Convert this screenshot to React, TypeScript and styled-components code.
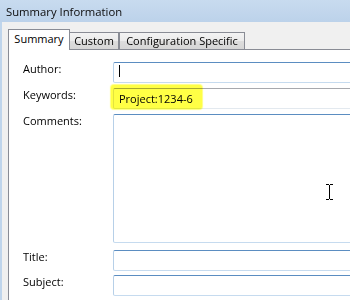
import styled, { createGlobalStyle } from "styled-components";

// ---------------- css ----------------
const GlobalStyle = createGlobalStyle`
  body {
    margin: 0;
    background: #f0f0f0;
    font-family: "Open Sans", "Noto Sans", sans-serif;
  }
`;

const Window = styled.div`
  position: relative;
  width: 350px;
  height: 300px;
  overflow: hidden;
  display: flex;
  flex-direction: column;
  background: #f0f0f0;
`;

const TitleBar = styled.div`
  flex: none;
  height: 22px;
  padding-left: 6px;
  display: flex;
  align-items: center;
  background: linear-gradient(#c8dbef, #bcd2ea);
  font-size: 11.3px;
  color: #0a0a0a;
`;

const Body = styled.div`
  flex: 1;
  display: flex;
  flex-direction: column;
  border-left: 2px solid #bfd5ec;
  padding: 7px 0 0 6px;
`;

const TabStrip = styled.div`
  flex: none;
  display: flex;
  align-items: flex-end;
  height: 20px;
`;

const Tab = styled.div<{ $active?: boolean; $w: number; $ml?: number }>`
  position: relative;
  box-sizing: border-box;
  width: ${(p) => p.$w}px;
  margin-left: ${(p) => p.$ml ?? 0}px;
  display: flex;
  justify-content: center;
  font-size: 11px;
  line-height: 14px;
  color: #000;
  border: 1px solid #898c95;
  border-bottom: none;
  ${(p) =>
    p.$active
      ? `
    height: 21px;
    margin-bottom: -1px;
    padding-top: 2px;
    background: #fff;
    z-index: 1;
  `
      : `
    height: 17px;
    padding-top: 1px;
    background: linear-gradient(#f3f3f3, #ebebeb 50%, #dddddd 51%, #d6d6d6);
  `}
`;

const Panel = styled.div`
  flex: 1;
  background: #fff;
  border-top: 1px solid #898c95;
  border-left: 1px solid #898c95;
  padding: 12px 0 0 14px;
  display: flex;
  flex-direction: column;
`;

const Field = styled.div<{ $mt?: number }>`
  display: flex;
  margin-top: ${(p) => p.$mt ?? 0}px;
`;

const Label = styled.div`
  flex: none;
  width: 90px;
  font-size: 11px;
  line-height: 14px;
  color: #000;
`;

const Box = styled.div<{ $h?: number; $plain?: boolean }>`
  position: relative;
  flex: none;
  box-sizing: border-box;
  width: 260px;
  height: ${(p) => p.$h ?? 21}px;
  border: 1px solid;
  border-color: ${(p) =>
    p.$plain
      ? "#a7a9ae #e2e3ea #e3e9ef #e2e3ea"
      : "#5b8dc1 #b7d0e8 #c6dbef #b7d0e8"};
  border-radius: 2px;
  padding-left: 5px;
  font-size: 11px;
  line-height: 19px;
  color: #000;
`;

const Caret = styled.div`
  width: 1px;
  height: 12px;
  margin-top: 2px;
  background: #000;
`;

const Highlight = styled.span`
  position: absolute;
  left: -3px;
  top: -4px;
  width: 91px;
  height: 24px;
  border-radius: 3px;
  background: #ffff45;
  box-shadow: 0 0 1px 1px #ffff80;
  mix-blend-mode: multiply;
  pointer-events: none;
`;

const Pointer = styled.svg`
  position: absolute;
  left: 326px;
  top: 184px;
`;
// ---------------- css end ----------------

const IBeam = () => (
  <Pointer width="8" height="16" viewBox="0 0 8 16">
    <path
      d="M0 0.5h3M4 0.5h3M3.5 1v14M0 15.5h3M4 15.5h3"
      stroke="#000"
      strokeWidth="1"
      fill="none"
    />
  </Pointer>
);

const App = () => {
  return (
    <>
      <GlobalStyle />
      <Window>
        <TitleBar>Summary Information</TitleBar>
        <Body>
          <TabStrip>
            <Tab $active $w={62}>
              Summary
            </Tab>
            <Tab $w={50} $ml={-1}>
              Custom
            </Tab>
            <Tab $w={126}>Configuration Specific</Tab>
          </TabStrip>
          <Panel>
            <Field>
              <Label>Author:</Label>
              <Box>
                <Caret />
              </Box>
            </Field>
            <Field $mt={5}>
              <Label>Keywords:</Label>
              <Box $plain>
                Project:1234-6
                <Highlight />
              </Box>
            </Field>
            <Field $mt={5}>
              <Label>Comments:</Label>
              <Box $h={129} />
            </Field>
            <Field $mt={7}>
              <Label>Title:</Label>
              <Box />
            </Field>
            <Field $mt={4}>
              <Label>Subject:</Label>
              <Box />
            </Field>
          </Panel>
        </Body>
        <IBeam />
      </Window>
    </>
  );
};
export default App;
